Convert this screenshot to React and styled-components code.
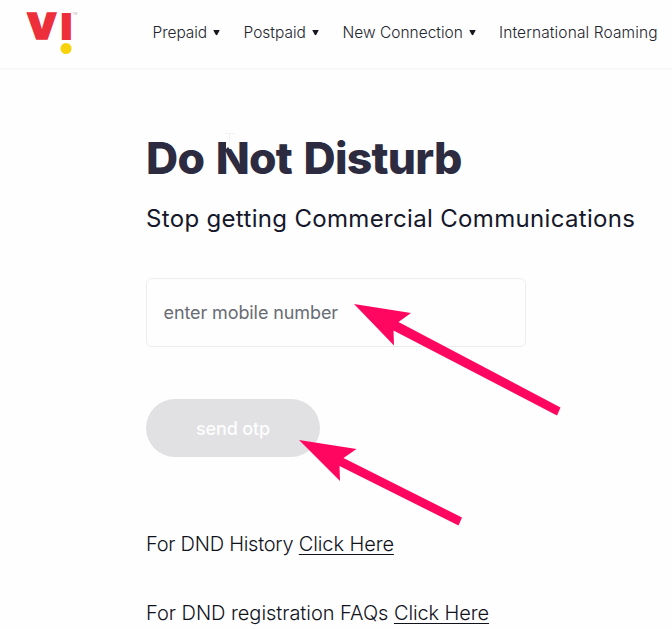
import React from "react";
import styled, { createGlobalStyle } from "styled-components";

const GlobalStyle = createGlobalStyle`
     * {
          box-sizing: border-box;
     }
     body {
          margin: 0;
          background-color: #fefefe;
          font-family: Inter, "Liberation Sans", sans-serif;
     }
`;

const PageWrapper = styled.div`
     position: relative;
     width: 672px;
     height: 629px;
     overflow: hidden;
`;

const Header = styled.header`
     display: flex;
     height: 70px;
     padding-left: 24px;
     border-bottom: 2px solid #f9f9fa;
`;

const Logo = styled.svg`
     width: 56px;
     height: 58px;
     margin-right: 72.5px;
     flex: none;
`;

const Nav = styled.nav`
     display: flex;
     height: 64px;
     align-items: center;
`;

const NavItem = styled.a`
     display: flex;
     flex: none;
     align-items: center;
     width: ${(props) => props.$width}px;
     font-size: 15.5px;
     font-weight: 300;
     letter-spacing: ${(props) => props.$spacing || 0}px;
     color: #23252f;
     white-space: nowrap;
`;

const Caret = styled.svg`
     width: 7px;
     height: 7px;
     margin-left: 6px;
`;

const Content = styled.main`
     display: flex;
     flex-direction: column;
     align-items: flex-start;
     padding: 60px 0 0 146px;
`;

const Title = styled.h1`
     margin: 0;
     font-size: 44.5px;
     line-height: 56px;
     font-weight: 800;
     letter-spacing: -0.75px;
     word-spacing: 2.5px;
     color: #2c2b3f;
     white-space: nowrap;
`;

const Subtitle = styled.p`
     margin: 17px 0 43px;
     font-size: 24px;
     line-height: 32px;
     letter-spacing: 0.33px;
     color: #15172a;
     white-space: nowrap;
`;

const NumberInput = styled.input`
     width: 379.5px;
     height: 69px;
     padding: 0 16.5px;
     border: 1px solid #ededee;
     border-radius: 6px;
     outline: none;
     background-color: #fefefe;
     font-family: inherit;
     font-size: 18px;
     letter-spacing: -0.1px;
     &::placeholder {
          color: #696c74;
          opacity: 1;
     }
`;

const SendButton = styled.button`
     width: 174px;
     height: 58px;
     margin: 52px 0 72px;
     padding: 0;
     border: none;
     border-radius: 29px;
     background-color: #e1e1e3;
     color: #fdfdfd;
     font-family: inherit;
     font-size: 18px;
     font-weight: 500;
     letter-spacing: -0.15px;
`;

const HelpLine = styled.p`
     margin: 0 0 38px;
     font-size: 20px;
     line-height: 31px;
     font-weight: 300;
     letter-spacing: ${(props) => props.$spacing || 0}px;
     color: #10121c;
     white-space: nowrap;
     a {
          letter-spacing: -0.1px;
          text-decoration: underline;
          text-decoration-thickness: 1px;
          text-underline-offset: 3px;
     }
`;

const Overlay = styled.svg`
     position: absolute;
     top: 0;
     left: 0;
     pointer-events: none;
`;

const navItems = [
     { label: "Prepaid", width: 91, menu: true, spacing: -0.05 },
     { label: "Postpaid", width: 99, menu: true },
     { label: "New Connection", width: 156.5, menu: true },
     { label: "International Roaming", width: 160, spacing: 0.12 },
];

function BrandLogo() {
     return (
          <Logo viewBox="24 0 56 58" fontFamily="Inter" fill="#ed2f3b">
               <text
                    x="26.8"
                    y="39.3"
                    fontSize="35.2"
                    fontWeight="900"
                    textLength="30"
                    lengthAdjust="spacingAndGlyphs"
                    stroke="#ed2f3b"
                    strokeWidth="1.6"
               >
                    V
               </text>
               <text x="59.7" y="40" fontSize="37" fontWeight="900" textLength="13.3" lengthAdjust="spacingAndGlyphs">
                    I
               </text>
               <text x="72.5" y="14.8" fontSize="3" fill="#b9a5a8">
                    TM
               </text>
               <circle cx="66" cy="48.5" r="5.5" fill="#f8d20a" />
          </Logo>
     );
}

export default function App() {
     return (
          <PageWrapper>
               <GlobalStyle />
               <Header>
                    <BrandLogo />
                    <Nav>
                         {navItems.map((item) => (
                              <NavItem key={item.label} $width={item.width} $spacing={item.spacing}>
                                   {item.label}
                                   {item.menu && (
                                        <Caret viewBox="0 0 6 6">
                                             <path d="M0.2 0.8H5.8L3.8 4.8Q3 6 2.2 4.8Z" fill="#17181f" />
                                        </Caret>
                                   )}
                              </NavItem>
                         ))}
                    </Nav>
               </Header>
               <Content>
                    <Title>Do Not Disturb</Title>
                    <Subtitle>Stop getting Commercial Communications</Subtitle>
                    <NumberInput placeholder="enter mobile number" />
                    <SendButton>send otp</SendButton>
                    <HelpLine $spacing={-0.26}>
                         For DND History <a>Click Here</a>
                    </HelpLine>
                    <HelpLine $spacing={-0.03}>
                         For DND registration FAQs <a>Click Here</a>
                    </HelpLine>
               </Content>
               {/* pointer and the two callout arrows */}
               <Overlay width="672" height="629" viewBox="0 0 672 629">
                    <path d="M225 133.5H235M229.5 134V142" stroke="#f2f2f3" strokeWidth="1" fill="none" />
                    <path d="M226 141H232V149H229.5L228 147L226 149Z" fill="#fefefe" />
                    <g fill="#ff0660">
                         <path d="M354 304L411 313L398.5 322L560.5 407.5L557 415.5L393.5 330.5L394 345.5Z" />
                         <path d="M299 440L356.5 449L343.5 458L462 517.5L458.5 525.5L339.5 466L340 481Z" />
                    </g>
               </Overlay>
          </PageWrapper>
     );
}
